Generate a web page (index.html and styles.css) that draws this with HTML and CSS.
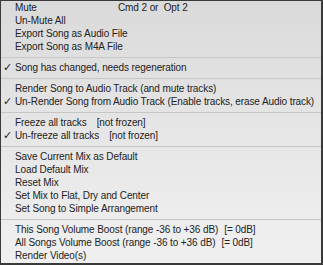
FILE: index.html
```html
<!DOCTYPE html>
<html lang="en">

<head>
  <meta charset="UTF-8">
  <title>Mix menu</title>
  <link rel="stylesheet" href="styles.css">
</head>

<body>
  <ul class="menu">
    <li class="menu-item"><span class="label">Mute</span><span>Cmd 2 or&nbsp; Opt 2</span></li>
    <li class="menu-item">Un-Mute All</li>
    <li class="menu-item">Export Song as Audio File</li>
    <li class="menu-item">Export Song as M4A File</li>
    <li class="menu-sep"></li>
    <li class="menu-item checked">Song has changed, needs regeneration</li>
    <li class="menu-sep"></li>
    <li class="menu-item">Render Song to Audio Track (and mute tracks)</li>
    <li class="menu-item checked">Un-Render Song from Audio Track (Enable tracks, erase Audio track)</li>
    <li class="menu-sep"></li>
    <li class="menu-item">Freeze all tracks<span class="note">[not frozen]</span></li>
    <li class="menu-item checked">Un-freeze all tracks<span class="note">[not frozen]</span></li>
    <li class="menu-sep"></li>
    <li class="menu-item">Save Current Mix as Default</li>
    <li class="menu-item">Load Default Mix</li>
    <li class="menu-item">Reset Mix</li>
    <li class="menu-item">Set Mix to Flat, Dry and Center</li>
    <li class="menu-item">Set Song to Simple Arrangement</li>
    <li class="menu-sep"></li>
    <li class="menu-item">This Song Volume Boost (range -36 to +36 dB)<span class="note small">[= 0dB]</span></li>
    <li class="menu-item">All Songs Volume Boost (range -36 to +36 dB)<span class="note small">[= 0dB]</span></li>
    <li class="menu-item">Render Video(s)</li>
  </ul>
</body>

</html>
```

FILE: styles.css
```css
* {
  margin: 0;
  padding: 0;
  box-sizing: border-box;
}

html,
body {
  width: 100%;
  height: 100%;
}

body {
  font-family: 'Liberation Sans', 'DejaVu Sans', sans-serif;
  font-size: 10px;
  letter-spacing: -0.1px;
  color: #222;
}

.menu {
  list-style: none;
  width: 323px;
  height: 265px;
  background: linear-gradient(to bottom, #dadada, #e6e6e6 50%, #f0f0f0);
  border: 1px solid #3a3a3a;
  border-right-width: 2px;
  border-bottom-width: 2px;
}

.menu-item {
  position: relative;
  height: 13px;
  line-height: 13px;
  padding-left: 14px;
  white-space: nowrap;
}

.menu-item.checked::before {
  content: '\2713';
  position: absolute;
  left: 2px;
  top: 0;
  font-family: 'DejaVu Sans', sans-serif;
  font-size: 11px;
}

.menu-item .label {
  display: inline-block;
  width: 103px;
}

.menu-sep {
  height: 8px;
  display: flex;
  align-items: center;
}

.menu-sep::after {
  content: '';
  display: block;
  width: 100%;
  height: 1px;
  background: #c6c6c6;
}

.note {
  margin-left: 10px;
}

.note.small {
  margin-left: 6px;
}
```
